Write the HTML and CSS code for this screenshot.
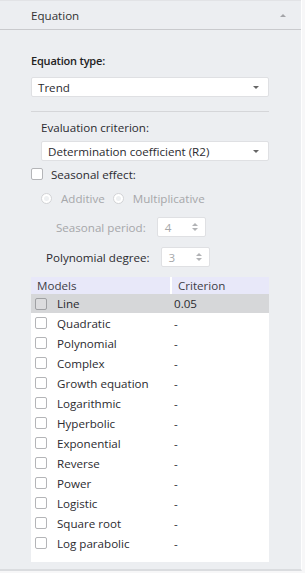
FILE: index.html
```html
<!DOCTYPE html>
<html lang="en">
<head>
    <meta charset="UTF-8">
    <title>Equation</title>
    <link rel="stylesheet" href="styles.css">
</head>
<body>
    <div class="panel">
        <div class="panel-header">
            <span>Equation</span>
            <span class="collapse-arrow"></span>
        </div>
        <div class="panel-body">
            <div class="field-label">Equation type:</div>
            <div class="select wide">
                <span>Trend</span>
                <span class="caret"></span>
            </div>
            <div class="separator"></div>

            <div class="sub">
                <div class="sub-label">Evaluation criterion:</div>
                <div class="select">
                    <span>Determination coefficient (R2)</span>
                    <span class="caret"></span>
                </div>
            </div>

            <label class="check-row">
                <span class="box"></span>
                <span>Seasonal effect:</span>
            </label>

            <div class="radio-row">
                <span class="radio"></span><span class="radio-text">Additive</span>
                <span class="radio"></span><span class="radio-text">Multiplicative</span>
            </div>

            <div class="spin-row period">
                <span class="spin-label disabled">Seasonal period:</span>
                <div class="spin">
                    <span>4</span>
                    <span class="arrows"><i class="up"></i><i class="down"></i></span>
                </div>
            </div>

            <div class="spin-row degree">
                <span class="spin-label">Polynomial degree:</span>
                <div class="spin">
                    <span>3</span>
                    <span class="arrows"><i class="up"></i><i class="down"></i></span>
                </div>
            </div>

            <div class="models">
                <div class="models-head">
                    <div class="col-name">Models</div>
                    <div class="col-value">Criterion</div>
                </div>
                <div class="model-row selected"><span class="box"></span><span class="name">Line</span><span class="value">0.05</span></div>
                <div class="model-row"><span class="box"></span><span class="name">Quadratic</span><span class="value">-</span></div>
                <div class="model-row"><span class="box"></span><span class="name">Polynomial</span><span class="value">-</span></div>
                <div class="model-row"><span class="box"></span><span class="name">Complex</span><span class="value">-</span></div>
                <div class="model-row"><span class="box"></span><span class="name">Growth equation</span><span class="value">-</span></div>
                <div class="model-row"><span class="box"></span><span class="name">Logarithmic</span><span class="value">-</span></div>
                <div class="model-row"><span class="box"></span><span class="name">Hyperbolic</span><span class="value">-</span></div>
                <div class="model-row"><span class="box"></span><span class="name">Exponential</span><span class="value">-</span></div>
                <div class="model-row"><span class="box"></span><span class="name">Reverse</span><span class="value">-</span></div>
                <div class="model-row"><span class="box"></span><span class="name">Power</span><span class="value">-</span></div>
                <div class="model-row"><span class="box"></span><span class="name">Logistic</span><span class="value">-</span></div>
                <div class="model-row"><span class="box"></span><span class="name">Square root</span><span class="value">-</span></div>
                <div class="model-row"><span class="box"></span><span class="name">Log parabolic</span><span class="value">-</span></div>
            </div>
        </div>
    </div>
</body>
</html>
```

FILE: styles.css
```css
body {
    margin: 0;
    background: #f7f7f8;
    font-family: 'Open Sans', 'Segoe UI', sans-serif;
    font-size: 11.6px;
    color: #2b2b30;
}
.panel {
    width: 302px;
    height: 571px;
    background: #eceef1;
    border-right: 1px solid #ffffff;
    border-bottom: 2px solid #dadcdf;
    box-sizing: border-box;
}
.panel-header {
    height: 30px;
    box-sizing: border-box;
    border-top: 1px solid #e2e3e6;
    border-bottom: 1px solid #c9cacd;
    display: flex;
    align-items: center;
    justify-content: space-between;
    padding: 0 15px 0 31px;
    font-size: 11.6px;
    color: #333;
}
.collapse-arrow {
    width: 0;
    height: 0;
    border-left: 3px solid transparent;
    border-right: 3px solid transparent;
    border-bottom: 3px solid #a3a4a8;
}
.panel-body {
    padding: 23px 32px 0 31px;
}
.field-label {
    font-weight: 600;
    font-size: 11px;
    letter-spacing: -0.2px;
    line-height: 16px;
    color: #222;
}
.select {
    height: 20px;
    box-sizing: border-box;
    background: #fff;
    border: 1px solid #dfe0e3;
    border-radius: 2px;
    display: flex;
    align-items: center;
    justify-content: space-between;
    padding: 0 9px 0 6px;
}
.select.wide {
    margin-top: 8px;
}
.caret {
    width: 0;
    height: 0;
    border-left: 3px solid transparent;
    border-right: 3px solid transparent;
    border-top: 3px solid #666;
}
.separator {
    height: 1px;
    background: #d5d6d9;
    margin-top: 14px;
}
.sub {
    padding-left: 10px;
    margin-top: 8px;
}
.sub-label {
    line-height: 16px;
    margin-bottom: 5px;
}
.check-row {
    display: flex;
    align-items: center;
    gap: 8px;
    height: 14px;
    margin-top: 6px;
}
.box {
    width: 12px;
    height: 12px;
    box-sizing: border-box;
    border: 1px solid #b4b5b8;
    border-radius: 2px;
    background: #fff;
    flex: none;
}
.radio-row {
    display: flex;
    align-items: center;
    height: 16px;
    margin-top: 9px;
    padding-left: 10px;
    color: #a6a7aa;
}
.radio {
    width: 11px;
    height: 11px;
    box-sizing: border-box;
    border-radius: 50%;
    border: 1px solid #d2d3d6;
    background: #fff;
    position: relative;
    flex: none;
}
.radio::after {
    content: "";
    position: absolute;
    left: 2px;
    top: 2px;
    width: 5px;
    height: 5px;
    border-radius: 50%;
    background: #eef0f2;
}
.radio-text {
    margin: 0 8px 0 9px;
}
.spin-row {
    display: flex;
    align-items: center;
    gap: 11px;
}
.spin-row.period {
    margin-top: 11px;
    padding-left: 25px;
}
.spin-row.degree {
    margin-top: 10px;
    padding-left: 15px;
}
.spin-label.disabled {
    color: #a6a7aa;
}
.spin {
    width: 49px;
    height: 20px;
    box-sizing: border-box;
    background: #fff;
    border: 1px solid #dfe0e3;
    border-radius: 2px;
    display: flex;
    align-items: center;
    justify-content: space-between;
    padding: 0 7px;
    color: #a6a7aa;
}
.arrows {
    display: flex;
    flex-direction: column;
    gap: 2px;
}
.arrows i {
    width: 0;
    height: 0;
    border-left: 3px solid transparent;
    border-right: 3px solid transparent;
}
.arrows .up {
    border-bottom: 3px solid #b2b3b6;
}
.arrows .down {
    border-top: 3px solid #b2b3b6;
}
.models {
    margin-top: 10px;
    background: #fff;
    height: 285px;
}
.models-head {
    display: flex;
    height: 17px;
    background: #e8e8f9;
    line-height: 17px;
    color: #3d3d46;
}
.col-name {
    width: 133px;
    padding-left: 6px;
    border-right: 2px solid #fff;
}
.col-value {
    padding-left: 6px;
}
.model-row {
    display: flex;
    align-items: center;
    height: 20px;
    padding-left: 4px;
}
.model-row.selected {
    background: #d6d7d9;
    height: 19px;
}
.model-row.selected .box {
    background: #dcdcde;
    border-color: #9fa0a3;
}
.model-row .name {
    width: 117px;
    padding-left: 10px;
}
```
